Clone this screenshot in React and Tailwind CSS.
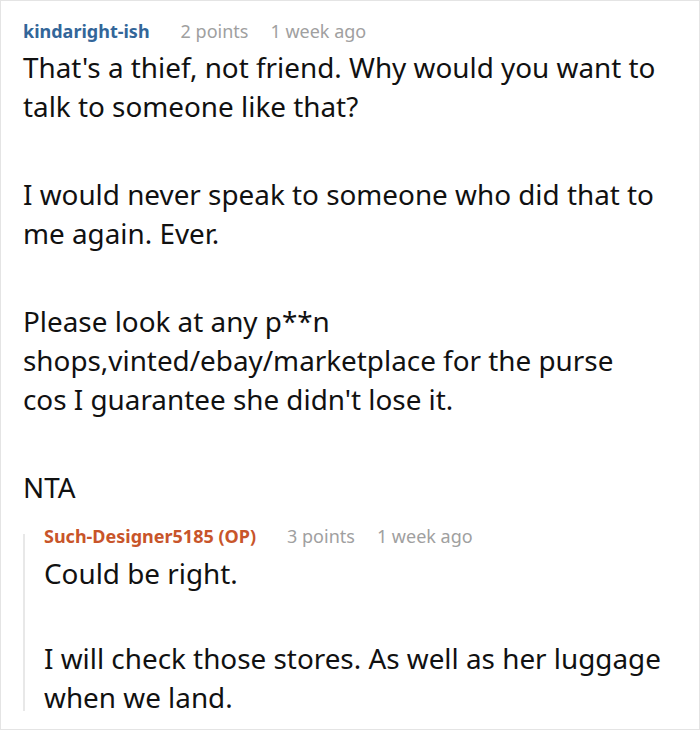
import React from "react";

const font = { fontFamily: '"Noto Sans", "Open Sans", sans-serif' };

function Meta({ name, points, time, nameClass }) {
  return (
    <div className="flex items-center text-[18px] leading-[26px] whitespace-nowrap">
      <span className={`font-bold ${nameClass}`}>{name}</span>
      <span className="ml-[31px] text-[#a0a0a0]">{points}</span>
      <span className="ml-[22px] text-[#a0a0a0]">{time}</span>
    </div>
  );
}

function Body({ paragraphs, gap }) {
  return (
    <div className="text-[27.85px] leading-[39px] text-[#111] whitespace-nowrap">
      {paragraphs.map((p, i) => (
        <p key={i} className={i < paragraphs.length - 1 ? gap : ""}>
          {p.map((line, j) => (
            <span key={j} className="block">
              {line}
            </span>
          ))}
        </p>
      ))}
    </div>
  );
}

export default function App() {
  return (
    <div
      style={font}
      className="w-[700px] h-[730px] bg-white border border-[#e4e4e4] overflow-hidden"
    >
      <div className="pl-[22px] pt-[17px]">
        <Meta
          name="kindaright-ish"
          points="2 points"
          time="1 week ago"
          nameClass="text-[#336699]"
        />
        <div className="mt-[4px]">
          <Body
            gap="mb-[49px]"
            paragraphs={[
              ["That's a thief, not friend. Why would you want to", "talk to someone like that?"],
              ["I would never speak to someone who did that to", "me again. Ever."],
              [
                "Please look at any p**n",
                "shops,vinted/ebay/marketplace for the purse",
                "cos I guarantee she didn't lose it.",
              ],
              ["NTA"],
            ]}
          />
        </div>

        {/* reply */}
        <div className="mt-[16px] flex h-[188px]">
          <div className="mt-[11px] w-[2px] bg-[#e8e8e8]" />
          <div className="pl-[19px]">
            <Meta
              name="Such-Designer5185 (OP)"
              points="3 points"
              time="1 week ago"
              nameClass="text-[#c8552a]"
            />
            <div className="mt-[5px]">
              <Body
                gap="mb-[46px]"
                paragraphs={[
                  ["Could be right."],
                  ["I will check those stores. As well as her luggage", "when we land."],
                ]}
              />
            </div>
          </div>
        </div>
      </div>
    </div>
  );
}
